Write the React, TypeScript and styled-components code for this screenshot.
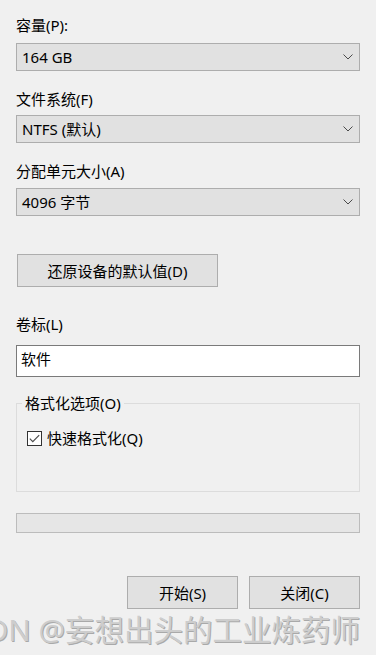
import React from "react";
import styled, { createGlobalStyle } from "styled-components";

const GlobalStyle = createGlobalStyle`
  html, body {
    margin: 0;
    padding: 0;
    background: #f0f0f0;
    overflow: hidden;
  }
  body {
    font-family: "Noto Sans", "Noto Sans CJK SC", sans-serif;
    font-size: 15px;
    color: #000;
  }
`;

const Page = styled.div`
  box-sizing: border-box;
  width: 376px;
  height: 655px;
  padding: 15px 16px 0 16px;
  display: flex;
  flex-direction: column;
  overflow: hidden;
`;

const Label = styled.div<{ $mt?: number }>`
  margin-top: ${(p) => p.$mt ?? 0}px;
  line-height: 20px;
  height: 20px;
  white-space: nowrap;
`;

const Combo = styled.div<{ $mt: number }>`
  margin-top: ${(p) => p.$mt}px;
  box-sizing: border-box;
  height: 28px;
  border: 1px solid #adadad;
  background: #e1e1e1;
  display: flex;
  align-items: center;
  justify-content: space-between;
  padding: 0 6px 0 5px;
  line-height: 20px;
`;

const Chevron = () => (
  <svg width="10" height="6" viewBox="0 0 10 6" aria-hidden>
    <path d="M0.5 0.5 L5 5 L9.5 0.5" fill="none" stroke="#4a4a4a" strokeWidth="1" />
  </svg>
);

const PushButton = styled.div<{ $w: number }>`
  box-sizing: border-box;
  width: ${(p) => p.$w}px;
  height: 33px;
  border: 1px solid #adadad;
  background: #e1e1e1;
  display: flex;
  align-items: center;
  justify-content: center;
  line-height: 20px;
  white-space: nowrap;
`;

const ResetRow = styled.div`
  margin-top: 38px;
  padding-left: 1px;
  display: flex;
`;

const TextBox = styled.div`
  margin-top: 11px;
  box-sizing: border-box;
  height: 32px;
  border: 1px solid #7a7a7a;
  background: #fff;
  padding: 3px 4px 0 4px;
  line-height: 20px;
`;

const Group = styled.fieldset`
  margin: 16px 0 0 0;
  min-width: 0;
  border: 1px solid #dcdcdc;
  padding: 15px 0 43px 10px;
`;

const Legend = styled.legend`
  margin-left: -5px;
  padding: 0 3px;
  line-height: 20px;
  font-size: 15px;
`;

const CheckRow = styled.div`
  display: flex;
  align-items: center;
  height: 20px;
  gap: 5px;
  line-height: 20px;
`;

const CheckBox = styled.span`
  box-sizing: border-box;
  width: 15px;
  height: 15px;
  border: 1px solid #333;
  background: #fff;
  display: flex;
  align-items: center;
  justify-content: center;
`;

const Progress = styled.div`
  margin-top: 21px;
  box-sizing: border-box;
  height: 20px;
  border: 1px solid #bcbcbc;
  background: #e6e6e6;
`;

const ActionRow = styled.div`
  margin-top: 43px;
  display: flex;
  justify-content: flex-end;
  gap: 11px;
`;

const Watermark = styled.div`
  margin-top: 6px;
  display: flex;
  justify-content: flex-end;
  white-space: nowrap;
  font-size: 29.5px;
  line-height: 30px;
  color: #cdcdcd;
  text-shadow: 1px 1px 0 #a9a9a9;
`;

export default function App() {
  return (
    <>
      <GlobalStyle />
      <Page>
        <Label>容量(P):</Label>
        <Combo $mt={8}>
          <span>164 GB</span>
          <Chevron />
        </Combo>

        <Label $mt={18}>文件系统(F)</Label>
        <Combo $mt={6}>
          <span>NTFS (默认)</span>
          <Chevron />
        </Combo>

        <Label $mt={18}>分配单元大小(A)</Label>
        <Combo $mt={7}>
          <span>4096 字节</span>
          <Chevron />
        </Combo>

        <ResetRow>
          <PushButton $w={201}>还原设备的默认值(D)</PushButton>
        </ResetRow>

        <Label $mt={27}>卷标(L)</Label>
        <TextBox>软件</TextBox>

        <Group>
          <Legend>格式化选项(O)</Legend>
          <CheckRow>
            <CheckBox>
              <svg width="11" height="9" viewBox="0 0 11 9" aria-hidden>
                <path d="M0.8 4.6 L3.8 7.6 L10.2 1.2" fill="none" stroke="#4d4d4d" strokeWidth="1.2" />
              </svg>
            </CheckBox>
            <span>快速格式化(Q)</span>
          </CheckRow>
        </Group>

        <Progress />

        <ActionRow>
          <PushButton $w={111}>开始(S)</PushButton>
          <PushButton $w={111}>关闭(C)</PushButton>
        </ActionRow>

        <Watermark>CSDN @妄想出头的工业炼药师</Watermark>
      </Page>
    </>
  );
}
